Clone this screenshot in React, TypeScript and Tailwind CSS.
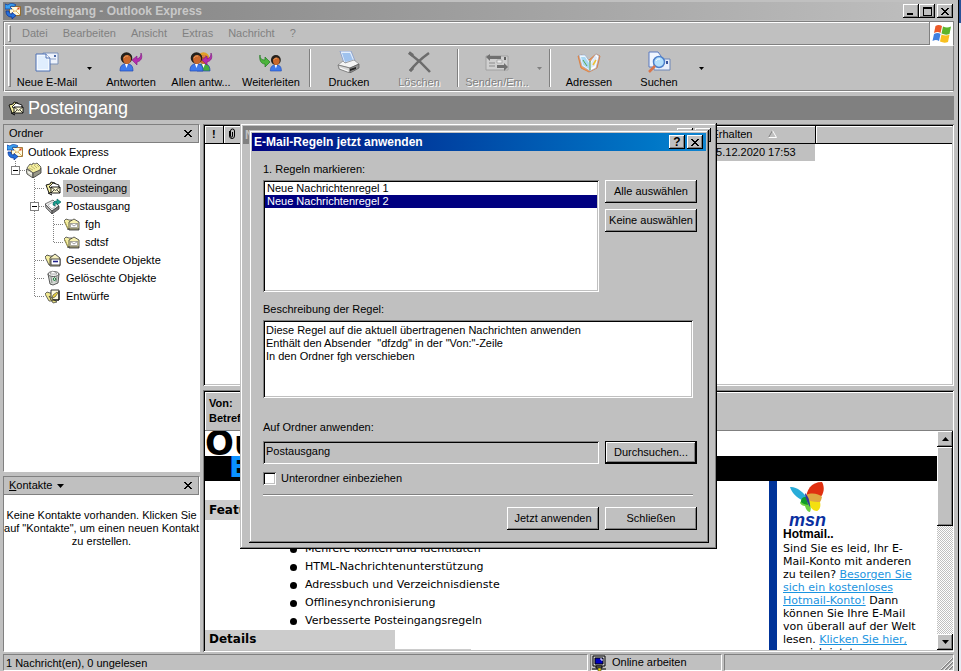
import React, { useState } from "react";

const raised =
    "bg-[#c0c0c0] shadow-[inset_-1px_-1px_#000,inset_1px_1px_#fff,inset_-2px_-2px_#808080]";
const windowFrame =
    "bg-[#c0c0c0] shadow-[inset_-1px_-1px_#000,inset_1px_1px_#c0c0c0,inset_-2px_-2px_#808080,inset_2px_2px_#fff]";
const sunken =
    "shadow-[inset_1px_1px_#808080,inset_-1px_-1px_#fff,inset_2px_2px_#000,inset_-2px_-2px_#c0c0c0]";

interface IconProps {
    className?: string;
}

const OutlookIcon: React.FC<IconProps> = ({ className = "size-4" }) => (
    <svg viewBox="0 0 16 16" className={className}>
        <path d="M4.500 3.500h11v9h-11z" fill="#fffbe0" stroke="#8a5a10" strokeWidth=".8" />
        <path d="M5 4l5 4.500L15 4M5 12l4-4M15 12l-4-4" fill="none" stroke="#d8a040" strokeWidth=".8" />
        <path d="M12.500 4.500h2v2h-2z" fill="#e04020" />
        <path d="M0 1l3 1c2-2 5-2 8 0L9 3.500C7 3 6 3 5 4l2 2H0z" fill="#3aa0f0" stroke="#0838a0" strokeWidth=".7" />
        <path d="M1 8c0 4 2 6 6 6v2l4-3.500L7 9.500V11c-2 0-3-1-3-3z" fill="#2470dc" stroke="#062c90" strokeWidth=".7" />
    </svg>
);

const InboxIcon: React.FC<IconProps> = ({ className = "size-4" }) => (
    <svg viewBox="0 0 16 16" className={className}>
        <path d="M1 5l4-1 1-2 4 1 1 3-1 6-6 1z" fill="#f5efa0" stroke="#000" strokeWidth=".9" />
        <path d="M4 7l4-4 6 2-1 7z" fill="#fff" stroke="#000" strokeWidth=".8" />
        <path d="M6 7h9v6H6z" fill="#fffbd8" stroke="#000" strokeWidth=".9" />
        <path d="M6 7l4.500 3.500L15 7M6 13l3-3M15 13l-3-3" fill="none" stroke="#000" strokeWidth=".7" />
        <path d="M3 13l4 2" stroke="#000" />
    </svg>
);

const LocalFoldersIcon: React.FC<IconProps> = ({ className = "size-4" }) => (
    <svg viewBox="0 0 16 16" className={className}>
        <path d="M0 7l7 3v6l-6-4z" fill="#d8d8c8" stroke="#333" strokeWidth=".8" />
        <path d="M7 10l8-4v5l-8 5z" fill="#989888" stroke="#333" strokeWidth=".8" />
        <path d="M1 6l3-4 2 1 1-2 2 1 2-1 4 4-1 3-7 3z" fill="#f5efa0" stroke="#444" strokeWidth=".8" />
        <path d="M3 6l4 2M5 4l4 3M8 3l3 3M11 3l2 2" stroke="#a8a060" strokeWidth=".7" />
        <path d="M2 10l4 2" stroke="#fff" />
    </svg>
);

const OutboxIcon: React.FC<IconProps> = ({ className = "size-4" }) => (
    <svg viewBox="0 0 16 16" className={className}>
        <path d="M0 6l8-4 6 6-7 5z" fill="#ececec" stroke="#555" strokeWidth=".8" />
        <path d="M0 6l7 7v3L1 10z" fill="#a8a8a8" stroke="#444" strokeWidth=".7" />
        <path d="M7 13l7-5v3l-7 5z" fill="#787878" stroke="#333" strokeWidth=".7" />
        <path d="M3 7l5-3 3 4-4 3z" fill="#fff" stroke="#999" strokeWidth=".6" />
        <path d="M8 7c0-3 1-4 4-4V1l4 3-4 3V5c-2 0-2 1-2 3z" fill="#18a090" stroke="#045c58" strokeWidth=".6" />
    </svg>
);

const FolderIcon: React.FC<IconProps> = ({ className = "size-4" }) => (
    <svg viewBox="0 0 16 16" className={className}>
        <path d="M0 5l2-2 3 1h3l2 9H4z" fill="#f5efa0" stroke="#444" strokeWidth=".8" />
        <path d="M5 6l5-3 5 3v8H5z" fill="#f8f2b0" stroke="#333" strokeWidth=".8" />
        <path d="M6.500 7.500h7v4h-7z" fill="#fff" stroke="#777" strokeWidth=".6" />
        <path d="M6.500 7.500l3.500 2.500 3.500-2.500" fill="none" stroke="#777" strokeWidth=".7" />
        <path d="M3 13h12" stroke="#333" />
        <path d="M1 6l3 7" stroke="#a8a050" />
    </svg>
);

const SentIcon: React.FC<IconProps> = ({ className = "size-4" }) => (
    <svg viewBox="0 0 16 16" className={className}>
        <path d="M0 5l2-2 3 1h3l2 9H4z" fill="#f5efa0" stroke="#333" strokeWidth=".8" />
        <path d="M5 6l5-4 5 4v8H5z" fill="#f5f0c0" stroke="#222" strokeWidth=".8" />
        <path d="M6 7h9v6H6z" fill="#fff" stroke="#222" strokeWidth=".8" />
        <path d="M8 9.500h5" stroke="#20208a" strokeWidth="1.600" />
    </svg>
);

const TrashIcon: React.FC<IconProps> = ({ className = "size-4" }) => (
    <svg viewBox="0 0 16 16" className={className}>
        <path d="M3 4l2 10 3 1 5-2 1-9z" fill="#d4d8d4" stroke="#333" strokeWidth=".8" />
        <ellipse cx="8.500" cy="4" rx="5.500" ry="2.500" fill="#f4f4f4" stroke="#333" strokeWidth=".8" />
        <path d="M5 4l2-3 3 1 2 2z" fill="#fff" stroke="#777" strokeWidth=".6" />
        <path d="M6 7l1 6M12 7l-1 5" stroke="#8a8e8a" />
        <path d="M8 9l1.500-1.500L11 9l-1.500 2z" fill="none" stroke="#208040" />
    </svg>
);

const DraftsIcon: React.FC<IconProps> = ({ className = "size-4" }) => (
    <svg viewBox="0 0 16 16" className={className}>
        <path d="M0 6l2-2 3 1h2l2 8H4z" fill="#f0e890" stroke="#444" strokeWidth=".8" />
        <path d="M6 2h8v10H6z" fill="#fffce0" stroke="#222" strokeWidth=".9" />
        <path d="M4 8l8 6-4 1z" fill="#e8e080" stroke="#333" strokeWidth=".7" />
        <path d="M7 10l1-3 4-3 1 1-3 4z" fill="#f0d840" stroke="#333" strokeWidth=".6" />
        <path d="M14 3v9H7" fill="none" stroke="#000" />
    </svg>
);

const NewMailIcon = () => (
    <svg viewBox="0 0 24 22" className="h-[22px] w-6">
        <path d="M8 2h15v11H8z" fill="#eef3fc" stroke="#7d92b8" />
        <path d="M19 4h2v2h-2z" fill="#4a68a8" />
        <path d="M16 8h5" stroke="#8fa4c8" />
        <path d="M1 3h10l4 4v13H1z" fill="#f4f9ff" stroke="#4c70b4" />
        <path d="M3 18V5h7l3 4v9z" fill="#e0eefe" />
        <path d="M11 3v4h4" fill="#fff" stroke="#4c70b4" />
    </svg>
);

const Person: React.FC<{ x: number; shirt?: string; hair?: string }> = ({
    x,
    shirt = "#3f79ea",
    hair = "#24201c",
}) => (
    <g transform={`translate(${x} 0)`}>
        <path d="M0 20c0-5 2-6 4-7h5c3 1 4 3 4 7z" fill={shirt} stroke="#1f48b4" strokeWidth=".7" />
        <path d="M5 13h3l-1.500 4z" fill="#fff" />
        <circle cx="6.500" cy="7" r="5.800" fill={hair} />
        <path d="M3 7c1-2 2-3 4-3 3 0 4 2 4 4 0 3-2 5-4 5-3 0-4-3-4-6z" fill="#c9682c" />
        <path d="M4 7c1-2 2-2 4-2" stroke="#f0a060" fill="none" />
    </g>
);

const ReplyArrow = () => (
    <path d="M22 2c2 5 0 8-4 9v3l-5-5 5-4v3c3-1 4-3 4-6z" fill="#b42cae" stroke="#7c1680" strokeWidth=".6" />
);

const ReplyIcon = () => (
    <svg viewBox="0 0 24 22" className="h-[22px] w-6">
        <Person x={1} />
        <ReplyArrow />
    </svg>
);

const ReplyAllIcon = () => (
    <svg viewBox="0 0 24 22" className="h-[22px] w-6">
        <Person x={8} shirt="#46ae3c" hair="#e0a028" />
        <Person x={1} />
        <ReplyArrow />
    </svg>
);

const ForwardIcon = () => (
    <svg viewBox="0 0 24 22" className="h-[22px] w-6">
        <g transform="translate(2 3) scale(.85)">
            <Person x={11} />
        </g>
        <path d="M1 4c0 4 2 5 5 5V6l5 5-5 5v-3c-4 0-6-4-5-9z" fill="#4cb43c" stroke="#207a20" strokeWidth=".7" />
    </svg>
);

const PrinterIcon = () => (
    <svg viewBox="0 0 24 22" className="h-[22px] w-6">
        <path d="M3 0h11l4 10-11 2z" fill="#e4effd" stroke="#8098c8" strokeWidth=".8" />
        <path d="M5 2h8l3 7-8 2z" fill="#9fc2ee" />
        <path d="M1 14l5-4 2 2 9-3 5 4-9 4z" fill="#f4f4f4" stroke="#888" strokeWidth=".7" />
        <path d="M1 14l12 3v5L2 18z" fill="#d8d8d8" stroke="#666" strokeWidth=".7" />
        <path d="M13 17l9-4v4l-9 5z" fill="#929292" stroke="#555" strokeWidth=".7" />
        <path d="M13 18l6-2v2l-6 2z" fill="#222" />
        <path d="M3 17l8 3" stroke="#fff" />
    </svg>
);

const DeleteIcon = () => (
    <svg viewBox="0 0 24 22" className="h-[22px] w-6">
        <path d="M2 2c7 5 14 11 21 19" fill="none" stroke="#6c6c6c" strokeWidth="2.500" />
        <path d="M22 2C15 7 8 13 3 20" fill="none" stroke="#6c6c6c" strokeWidth="2.500" />
        <path d="M2 1.500l4 3M3 20l3-3" stroke="#6c6c6c" strokeWidth="3" />
    </svg>
);

const SendReceiveIcon = () => (
    <svg viewBox="0 0 24 22" className="h-[22px] w-6">
        <path d="M1 5h22v14H1z" fill="#d0d0d0" stroke="#a0a0a0" />
        <path d="M1 6l4-3v2h11v3H5v2z" fill="#707070" />
        <path d="M23 16l-4-4v2h-7v3h7v3z" fill="#707070" />
        <path d="M19 6h2v3h-2z" fill="#606060" />
        <path d="M4 12h6M4 15h6" stroke="#8c8c8c" />
        <path d="M12 9h5v3h-5z" fill="#eee" stroke="#909090" strokeWidth=".6" />
    </svg>
);

const AddressBookIcon = () => (
    <svg viewBox="0 0 24 22" className="h-[22px] w-6">
        <path d="M1 5l4-1 7 5 7-6 4 2-3 12-8 4-8-4z" fill="#f09a58" stroke="#d87838" strokeWidth=".8" />
        <path d="M2 4l6 0 5 7v9l-8-5z" fill="#eef8ff" stroke="#90a8d0" strokeWidth=".6" />
        <path d="M13 11l6-8 3 2-3 12-6 3z" fill="#fff" stroke="#90a8d0" strokeWidth=".6" />
        <path d="M4 6l4 0 4 6v6l-6-4z" fill="#a8d8f4" />
        <path d="M14 12l4-7 2 1-2 9-4 2z" fill="#dce8f8" />
        <path d="M6 9l4 6M13 10v9" stroke="#60a848" />
        <path d="M19 9l-3 5" stroke="#f0c030" strokeWidth="1.500" />
    </svg>
);

const SearchIcon = () => (
    <svg viewBox="0 0 24 22" className="h-[22px] w-6">
        <path d="M2 1h9l3 4v11H2z" fill="#f0f6ff" stroke="#5878c0" />
        <path d="M7 8h16v11H7z" fill="#e8effa" stroke="#6c86b8" />
        <path d="M19 10h2v3h-2z" fill="#38549c" />
        <circle cx="12" cy="11" r="5.500" fill="#b4e0fc" stroke="#4d80cc" strokeWidth="1.500" />
        <path d="M9 10c1-2 2-2 4-2" stroke="#fff" fill="none" />
        <path d="M8 15l-6 6" stroke="#d8764c" strokeWidth="2.500" />
    </svg>
);

const WindowsFlag = () => (
    <svg viewBox="0 0 20 20" className="size-5">
        <path d="M3.500 2C6 .5 8 1 10 2L8.500 9C7 8 5 7.500 2 9z" fill="#ec5a28" />
        <path d="M11 2.500c3 1.300 5 1.300 8 0L17.500 10c-3 1-5 .8-8-.5z" fill="#5cb42c" />
        <path d="M2 10c3-1.500 5-1 6.500 0L7 17c-2-1.300-4-1.300-6.500 0z" fill="#4080e0" />
        <path d="M9.500 10.500c3 1.300 5 1.300 8 .3L16 18c-3 1-5 .8-8-.5z" fill="#f8c020" />
    </svg>
);

const MsnButterfly = () => (
    <svg viewBox="0 0 36 33" className="h-[33px] w-9">
        <path d="M17 20C10 19 3 13 1 6c5-1 15 5 17 12z" fill="#28acd8" />
        <path d="M17 19C17 9 22 1 33 1c4 7 1 16-7 19z" fill="#e03010" />
        <path d="M17 14c6-3 13-1 16 2-1 4-2 5-3 6-4 1-9 0-12-2z" fill="#e0a840" />
        <path d="M19 19c5 2 8 2 12 2 1 4 0 8-3 9-5 0-8-5-9-11z" fill="#f4e010" />
        <path d="M17 18c-4 0-5 2-6 4 1 2 3 3 5 3 1 4 3 6 5 6 2-4 0-10-4-13z" fill="#6cd040" />
        <path d="M17 16c-4 0-5 2-5 5 2 2 4 2 7 3z" fill="#109c28" />
        <path d="M16 12c4 4 5 9 5 14-2-3-5-9-5-14z" fill="#3038a0" />
    </svg>
);

const OnlineIcon = () => (
    <svg viewBox="0 0 16 16" className="size-4">
        <path d="M2 1h12v10H2z" fill="#d0d0d0" stroke="#000" />
        <path d="M4 3h8v6H4z" fill="#0000c0" stroke="#000" />
        <path d="M9 4h2v2" fill="none" stroke="#fff" />
        <path d="M5 11h6v2H5zM1 14h14" fill="#888" stroke="#000" />
        <path d="M7 13h3v3H7z" fill="#e8d800" stroke="#333" strokeWidth=".6" />
    </svg>
);

const CloseGlyph = () => (
    <svg viewBox="0 0 8 7" className="h-[7px] w-2" shapeRendering="crispEdges">
        <path d="M0 0h2v1h1v1h2V1h1V0h2v1H7v1H6v1H5v1h1v1h1v1h1v1H6V6H5V5H3v1H2v1H0V6h1V5h1V4h1V3H2V2H1V1H0z" fill="#000" />
    </svg>
);

const Triangle: React.FC<{ up?: boolean }> = ({ up }) => (
    <svg viewBox="0 0 7 4" className="h-1 w-[7px]">
        <path d={up ? "M0 4h7L3.500 0z" : "M0 0h7L3.500 4z"} />
    </svg>
);

const CaptionButton: React.FC<{ label: string; children: React.ReactNode }> = ({ label, children }) => (
    <button
        type="button"
        aria-label={label}
        className={`flex h-[14px] w-4 items-center justify-center text-xs font-bold leading-none text-black ${raised}`}
    >
        {children}
    </button>
);

interface DialogProps {
    title: string;
    active?: boolean;
    className: string;
    children?: React.ReactNode;
}

const Dialog: React.FC<DialogProps> = ({ title, active, className, children }) => (
    <section role="dialog" aria-label={title} className={`absolute flex flex-col p-[3px] ${windowFrame} ${className}`}>
        <div
            className={`flex h-[18px] shrink-0 items-center justify-between pl-0.5 pr-[3px] text-xs font-bold ${
                active
                    ? "bg-linear-to-r from-[#000080] to-[#1084d0] text-white"
                    : "bg-linear-to-r from-[#808080] to-[#c0c0c0] text-[#c0c0c0]"
            }`}
        >
            <h2 className="whitespace-nowrap">{title}</h2>
            <div className="flex gap-0.5">
                <CaptionButton label="Hilfe">?</CaptionButton>
                <CaptionButton label="Schließen">
                    <CloseGlyph />
                </CaptionButton>
            </div>
        </div>
        {children}
    </section>
);

interface PushButtonProps {
    children: React.ReactNode;
    isDefault?: boolean;
}

const PushButton: React.FC<PushButtonProps> = ({ children, isDefault }) => (
    <button
        type="button"
        className={`h-[23px] w-[92px] shrink-0 whitespace-nowrap pb-px ${raised} ${isDefault ? "border border-black" : ""}`}
    >
        {children}
    </button>
);

const rules = ["Neue Nachrichtenregel 1", "Neue Nachrichtenregel 2"];
const description = `Diese Regel auf die aktuell übertragenen Nachrichten anwenden
Enthält den Absender  "dfzdg" in der "Von:"-Zeile
In den Ordner fgh verschieben`;

const ApplyRulesDialog = () => {
    const [selected, setSelected] = useState<number>(1);
    const [recursive, setRecursive] = useState<boolean>(false);

    return (
        <Dialog title="E-Mail-Regeln jetzt anwenden" active className="left-[249px] top-[130px] h-[413px] w-[460px]">
            <div className="flex flex-1 flex-col pl-[11px] pr-[9px] pt-3">
                <div id="rules-label" className="leading-[13px]">1. Regeln markieren:</div>
                <div className="mt-1 flex gap-1.5">
                    <ul
                        role="listbox"
                        aria-labelledby="rules-label"
                        className={`h-28 flex-1 bg-white p-0.5 ${sunken}`}
                    >
                        {rules.map((item, index) => (
                            <li
                                key={item}
                                role="option"
                                aria-selected={selected === index}
                                onClick={() => setSelected(index)}
                                className={`h-[13px] pl-0.5 leading-[13px] ${
                                    selected === index ? "bg-[#000080] text-white" : ""
                                }`}
                            >
                                {item}
                            </li>
                        ))}
                    </ul>
                    <div className="flex flex-col gap-1.5">
                        <PushButton>Alle auswählen</PushButton>
                        <PushButton>Keine auswählen</PushButton>
                    </div>
                </div>
                <label htmlFor="description" className="mt-[11px] leading-[13px]">
                    Beschreibung der Regel:
                </label>
                <textarea
                    id="description"
                    readOnly
                    value={description}
                    className={`mr-1 mt-1 block h-[78px] resize-none overflow-hidden bg-white px-[3px] py-1 leading-[13px] outline-none ${sunken}`}
                />
                <label htmlFor="target" className="mt-[23px] leading-[13px]">
                    Auf Ordner anwenden:
                </label>
                <div className="mt-[7px] flex gap-1.5">
                    <input
                        id="target"
                        readOnly
                        value="Postausgang"
                        className={`h-[23px] min-w-0 flex-1 bg-[#c0c0c0] px-[3px] pb-[3px] outline-none ${sunken}`}
                    />
                    <PushButton isDefault>Durchsuchen...</PushButton>
                </div>
                <label className="mt-2 flex items-center gap-[5px] leading-[13px]">
                    <input
                        type="checkbox"
                        checked={recursive}
                        onChange={() => setRecursive(!recursive)}
                        className={`size-[13px] appearance-none bg-white checked:bg-black ${sunken}`}
                    />
                    Unterordner einbeziehen
                </label>
                <div className="mr-1 mt-[9px] h-0.5 border-b border-t border-b-white border-t-[#808080]" />
                <div className="mt-[11px] flex justify-end gap-1.5">
                    <PushButton>Jetzt anwenden</PushButton>
                    <PushButton>Schließen</PushButton>
                </div>
            </div>
        </Dialog>
    );
};

interface ToolButtonProps {
    icon: React.ReactNode;
    label: string;
    disabled?: boolean;
}

const ToolButton: React.FC<ToolButtonProps> = ({ icon, label, disabled }) => (
    <button
        type="button"
        disabled={disabled}
        className={`flex w-[70px] shrink-0 flex-col items-center whitespace-nowrap pt-1 ${
            disabled ? "text-[#808080] [text-shadow:1px_1px_#fff]" : ""
        }`}
    >
        {icon}
        <span className="mt-[3px] leading-[13px]">{label}</span>
    </button>
);

const DropArrow: React.FC<{ disabled?: boolean }> = ({ disabled }) => (
    <button type="button" aria-label="Mehr" disabled={disabled} className="flex w-[14px] shrink-0 items-center justify-center">
        <svg viewBox="0 0 5 3" className={`h-[3px] w-[5px] ${disabled ? "text-[#808080]" : "text-black"}`}>
            <path d="M0 0h5L2.500 3z" fill="currentColor" />
        </svg>
    </button>
);

const Separator = () => (
    <div className="mx-[3px] my-0.5 w-0.5 shrink-0 border-l border-r border-l-[#808080] border-r-white" />
);

const Grip = () => <div className="my-0.5 w-[3px] shrink-0 border border-b-[#808080] border-l-white border-r-[#808080] border-t-white" />;

const menu = ["Datei", "Bearbeiten", "Ansicht", "Extras", "Nachricht", "?"];

interface Folder {
    name: string;
    icon: React.FC<IconProps>;
    // one entry for each 19px column left of the icon
    guides: ("none" | "line" | "tee" | "end" | "box" | "boxTee")[];
    selected?: boolean;
}

const folders: Folder[] = [
    { name: "Outlook Express", icon: OutlookIcon, guides: [] },
    { name: "Lokale Ordner", icon: LocalFoldersIcon, guides: ["box"] },
    { name: "Posteingang", icon: InboxIcon, guides: ["none", "tee"], selected: true },
    { name: "Postausgang", icon: OutboxIcon, guides: ["none", "boxTee"] },
    { name: "fgh", icon: FolderIcon, guides: ["none", "line", "tee"] },
    { name: "sdtsf", icon: FolderIcon, guides: ["none", "line", "end"] },
    { name: "Gesendete Objekte", icon: SentIcon, guides: ["none", "tee"] },
    { name: "Gelöschte Objekte", icon: TrashIcon, guides: ["none", "tee"] },
    { name: "Entwürfe", icon: DraftsIcon, guides: ["none", "end"] },
];

const Guide: React.FC<{ kind: Folder["guides"][number] }> = ({ kind }) => {
    const full = kind === "line" || kind === "tee" || kind === "boxTee";
    return (
        <svg viewBox="0 0 19 18" className="h-[18px] w-[19px] shrink-0" shapeRendering="crispEdges">
            <g stroke="#808080" strokeDasharray="1 1" fill="none">
                {kind !== "none" && <path d={full ? "M9.500 0V18" : "M9.500 0V9"} />}
                {kind !== "none" && kind !== "line" && <path d="M10 9.500H19" />}
            </g>
            {(kind === "box" || kind === "boxTee") && (
                <>
                    <path d="M5.500 5.500h8v8h-8z" fill="#fff" stroke="#808080" />
                    <path d="M7 9.500h5" stroke="#000" />
                </>
            )}
        </svg>
    );
};

const FolderTree = () => (
    <ul role="tree" className="flex-1 overflow-hidden bg-white">
        {folders.map(({ name, icon: Icon, guides, selected }) => (
            <li key={name} role="treeitem" aria-selected={!!selected} className="flex h-[18px] items-center pl-0.5">
                {guides.map((kind, index) => (
                    <Guide key={index} kind={kind} />
                ))}
                <Icon className="ml-px size-4 shrink-0" />
                <span className={`ml-0.5 px-[3px] leading-[17px] ${selected ? "bg-[#c0c0c0]" : ""}`}>{name}</span>
            </li>
        ))}
    </ul>
);

const PanelHeader: React.FC<{ children: React.ReactNode }> = ({ children }) => (
    <div className="flex h-[18px] shrink-0 items-center justify-between border-b border-r border-[#808080] bg-[#c0c0c0] pl-[5px] pr-1.5">
        {children}
        <button type="button" aria-label="Schließen">
            <CloseGlyph />
        </button>
    </div>
);

const th = "border-r border-black bg-[#c0c0c0] p-0 shadow-[inset_1px_1px_#fff] font-normal";

const MessageList = () => (
    <div className={`h-[262px] shrink-0 overflow-hidden bg-white p-0.5 ${sunken}`}>
        <table className="w-full table-fixed border-collapse text-left">
            <colgroup>
                <col className="w-[18px]" />
                <col className="w-[18px]" />
                <col className="w-[464px]" />
                <col className="w-[110px]" />
                <col />
            </colgroup>
            <thead>
                <tr className="h-[17px] border-b border-black">
                    <th className={`text-center ${th}`}>
                        <b>!</b>
                    </th>
                    <th className={th} aria-label="Anlage">
                        <svg viewBox="0 0 8 12" className="mx-auto h-3 w-2">
                            <path d="M1.500 3v5a2.500 2.500 0 005 0V3a2 2 0 00-4 0v5c0 1.500 2 1.500 2 0V4" fill="none" stroke="#000" />
                        </svg>
                    </th>
                    <th className={th} />
                    <th className={th}>
                        <span className="flex items-center gap-4 pl-1.5">
                            Erhalten
                            <svg viewBox="0 0 9 8" className="h-2 w-[9px]">
                                <path d="M.5 7.500l4-7" stroke="#808080" fill="none" />
                                <path d="M4.500.5l4 7h-8" stroke="#fff" fill="none" />
                            </svg>
                        </span>
                    </th>
                    <th className="bg-[#c0c0c0] shadow-[inset_1px_1px_#fff]" />
                </tr>
            </thead>
            <tbody>
                <tr className="h-[18px]">
                    <td />
                    <td />
                    <td className="bg-[#c0c0c0]" />
                    <td className="bg-[#c0c0c0] p-0 pl-[5px]">05.12.2020 17:53</td>
                    <td />
                </tr>
            </tbody>
        </table>
    </div>
);

const features = [
    "E-Mail und Newsgroups",
    "Mehrere Konten und Identitäten",
    "HTML-Nachrichtenunterstützung",
    "Adressbuch und Verzeichnisdienste",
    "Offlinesynchronisierung",
    "Verbesserte Posteingangsregeln",
];

const Scrollbar = () => (
    <div className="flex w-4 shrink-0 flex-col bg-[repeating-conic-gradient(#fff_0_25%,#c0c0c0_0_50%)] bg-[length:2px_2px]">
        <button type="button" aria-label="Nach oben" className={`flex h-4 items-center justify-center ${raised}`}>
            <Triangle up />
        </button>
        <div className={`h-[79px] ${raised}`} />
        <button type="button" aria-label="Nach unten" className={`mt-auto flex h-4 items-center justify-center ${raised}`}>
            <Triangle />
        </button>
    </div>
);

const Preview = () => (
    <div className={`flex min-h-0 flex-1 flex-col py-0.5 pl-0.5 pr-px ${sunken}`}>
        <div className="h-[39px] shrink-0 border-b border-[#808080] bg-[#c0c0c0] pl-1 pt-1 font-bold leading-[15px] shadow-[inset_1px_1px_#fff]">
            <div>Von:</div>
            <div>Betreff:</div>
        </div>
        <div className="flex min-h-0 flex-1 bg-white font-['DejaVu_Sans',sans-serif]">
            <div className="min-w-0 flex-1 overflow-hidden">
                <div className="h-[25px] text-[34px] font-bold leading-[25px]">Outlook</div>
                <div className="h-[25px] bg-black pl-6 text-[28px] font-bold leading-[23px] text-[#0a90ff]">Express</div>
                <div className="flex">
                    <div className="flex-1 pt-[19px]">
                        <h3 className="w-[190px] bg-[#ccc] pl-1 text-xs font-bold leading-5">Features</h3>
                        <ul className="pl-[85px] pt-0.5 leading-[18px]">
                            {features.map((item) => (
                                <li key={item} className="flex items-center gap-2">
                                    <span className="size-[7px] rounded-full bg-black" />
                                    {item}
                                </li>
                            ))}
                        </ul>
                        <h3 className="w-[190px] bg-[#ccc] pl-1 text-xs font-bold leading-[19px]">Details</h3>
                        <div className="h-5 w-[266px] bg-[#ccc]" />
                    </div>
                    <div className="w-[168px] border-l-8 border-[#003399] pl-1.5">
                        <div className="pl-1.5">
                            <MsnButterfly />
                        </div>
                        <div className="pl-1.5 font-['Liberation_Sans',sans-serif] text-lg font-bold italic leading-3 text-[#0a2fa0]">
                            msn
                        </div>
                        <div className="font-['Liberation_Sans',sans-serif] text-xs font-bold leading-4">Hotmail..</div>
                        <p className="w-[142px] leading-[13px]">
                            Sind Sie es leid, Ihr E-Mail-Konto mit anderen zu teilen?{" "}
                            <a href="#konto" className="text-[#1a94e0] underline">
                                Besorgen Sie sich ein kostenloses Hotmail-Konto!
                            </a>{" "}
                            Dann können Sie Ihre E-Mail von überall auf der Welt lesen.{" "}
                            <a href="#anmelden" className="text-[#1a94e0] underline">
                                Klicken Sie hier,
                            </a>{" "}
                            um sich jetzt anzumelden!
                        </p>
                    </div>
                </div>
            </div>
            <Scrollbar />
        </div>
    </div>
);

const statusCell = "border border-[#808080] border-b-white border-r-white";

const App = () => (
    <div className="relative flex h-screen overflow-hidden bg-[#e8ecf4] font-['Liberation_Sans',sans-serif] text-[11px] leading-[13px] text-black">
        <main className="flex min-w-0 flex-1 flex-col border-r border-black bg-[#c0c0c0] pl-[3px] pr-1 pt-0.5">
            <header className="flex h-[18px] shrink-0 items-center bg-linear-to-r from-[#808080] to-[#c0c0c0] pl-0.5 pr-px">
                <OutlookIcon />
                <h1 className="ml-[3px] flex-1 text-xs font-bold text-[#c8c8c8]">Posteingang - Outlook Express</h1>
                <div className="flex">
                    <CaptionButton label="Minimieren">
                        <span className="mr-0.5 mt-1.5 h-0.5 w-1.5 bg-black" />
                    </CaptionButton>
                    <CaptionButton label="Maximieren">
                        <span className="h-[9px] w-[9px] border border-t-2 border-black" />
                    </CaptionButton>
                    <div className="ml-0.5">
                        <CaptionButton label="Schließen">
                            <CloseGlyph />
                        </CaptionButton>
                    </div>
                </div>
            </header>

            <nav className="mt-px flex h-[25px] shrink-0 border border-[#808080] border-b-white shadow-[inset_1px_1px_#fff,inset_0_-1px_#808080]">
                <div className="flex flex-1 py-px pl-1">
                    <Grip />
                    <div className="flex items-center gap-[15px] pb-px pl-[11px] text-[#808080]">
                        {menu.map((item) => (
                            <button key={item} type="button">
                                {item}
                            </button>
                        ))}
                    </div>
                </div>
                <div className="flex w-6 items-center justify-center border-l border-[#808080] bg-white">
                    <WindowsFlag />
                </div>
            </nav>

            <div className="flex h-[46px] shrink-0 border border-t-0 border-[#808080] border-b-white pb-0.5 pl-1 pt-px shadow-[inset_1px_0_#fff,inset_0_-1px_#808080]">
                <Grip />
                <div className="w-px" />
                <ToolButton icon={<NewMailIcon />} label="Neue E-Mail" />
                <DropArrow />
                <ToolButton icon={<ReplyIcon />} label="Antworten" />
                <ToolButton icon={<ReplyAllIcon />} label="Allen antw..." />
                <ToolButton icon={<ForwardIcon />} label="Weiterleiten" />
                <Separator />
                <ToolButton icon={<PrinterIcon />} label="Drucken" />
                <ToolButton icon={<DeleteIcon />} label="Löschen" disabled />
                <Separator />
                <ToolButton icon={<SendReceiveIcon />} label="Senden/Em.." disabled />
                <DropArrow disabled />
                <Separator />
                <ToolButton icon={<AddressBookIcon />} label="Adressen" />
                <ToolButton icon={<SearchIcon />} label="Suchen" />
                <DropArrow />
            </div>

            <div className="mt-1 flex h-6 shrink-0 items-center gap-1 bg-[#808080] pl-[5px] text-lg text-white">
                <InboxIcon />
                <h2>Posteingang</h2>
            </div>

            <div className="mt-1 flex min-h-0 flex-1 gap-[3px]">
                <aside className="flex w-[197px] shrink-0 flex-col gap-1">
                    <section className="flex min-h-0 flex-1 flex-col border border-[#808080] border-b-white border-r-white">
                        <PanelHeader>Ordner</PanelHeader>
                        <FolderTree />
                    </section>
                    <section className="flex h-[176px] flex-col border border-[#808080] border-b-white border-r-white bg-white">
                        <PanelHeader>
                            <button type="button" className="flex flex-1 items-center gap-[5px]">
                                <span>
                                    <u>K</u>ontakte
                                </span>
                                <Triangle />
                            </button>
                        </PanelHeader>
                        <p className="pt-[14px] text-center">
                            Keine Kontakte vorhanden. Klicken Sie auf "Kontakte", um einen neuen Kontakt zu erstellen.
                        </p>
                    </section>
                </aside>
                <div className="flex min-w-0 flex-1 flex-col gap-1">
                    <MessageList />
                    <Preview />
                </div>
            </div>

            <footer className="mt-0.5 flex h-[17px] shrink-0 gap-0.5">
                <div className={`flex-1 pl-0.5 leading-[17px] ${statusCell}`}>1 Nachricht(en), 0 ungelesen</div>
                <div className={`flex w-[132px] items-center gap-[5px] leading-[17px] ${statusCell}`}>
                    <OnlineIcon />
                    Online arbeiten
                </div>
                <div className={`flex w-[230px] items-end justify-end ${statusCell}`}>
                    <svg viewBox="0 0 12 12" className="size-3">
                        <path d="M0 12L12 0M4 12l8-8M8 12l4-4" stroke="#808080" strokeWidth="1.500" />
                        <path d="M-1 12L12-1M3 12l9-9M7 12l5-5" stroke="#fff" strokeWidth=".8" />
                    </svg>
                </div>
            </footer>
        </main>
        <div className="w-0.5 shrink-0">
            <div className="h-[23px] bg-[#2a5298]" />
        </div>

        <Dialog title="Nachrichtenregeln" className="left-[240px] top-[123px] h-[426px] w-[477px]" />
        <ApplyRulesDialog />
    </div>
);

export default App;
